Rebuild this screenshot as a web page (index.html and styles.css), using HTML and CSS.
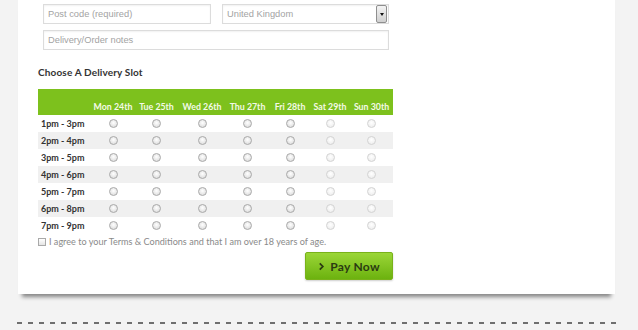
FILE: index.html
```html
<!DOCTYPE html>
<html>
<head>
  <title>Checkout - Delivery Slot</title>
  <link rel="stylesheet" href="styles.css">
</head>
<body>
  <div class="page">
    <div class="card">
      <div class="fields">
        <div class="field-row">
          <input class="text-input postcode" type="text" placeholder="Post code (required)">
          <div class="select-box">
            <span class="select-value">United Kingdom</span>
            <span class="select-btn"><span class="arrow"></span></span>
          </div>
        </div>
        <input class="text-input notes" type="text" placeholder="Delivery/Order notes">
      </div>

      <h3 class="slot-title">Choose A Delivery Slot</h3>

      <!-- Delivery slot grid -->
      <div class="slots">
        <div class="slot-row slot-head">
          <span></span>
          <span>Mon 24th</span>
          <span>Tue 25th</span>
          <span>Wed 26th</span>
          <span>Thu 27th</span>
          <span>Fri 28th</span>
          <span>Sat 29th</span>
          <span>Sun 30th</span>
        </div>
        <div class="slot-row">
          <span class="time">1pm - 3pm</span>
          <i class="radio"></i><i class="radio"></i><i class="radio"></i><i class="radio"></i><i class="radio"></i><i class="radio off"></i><i class="radio off"></i>
        </div>
        <div class="slot-row alt">
          <span class="time">2pm - 4pm</span>
          <i class="radio"></i><i class="radio"></i><i class="radio"></i><i class="radio"></i><i class="radio"></i><i class="radio off"></i><i class="radio off"></i>
        </div>
        <div class="slot-row">
          <span class="time">3pm - 5pm</span>
          <i class="radio"></i><i class="radio"></i><i class="radio"></i><i class="radio"></i><i class="radio"></i><i class="radio off"></i><i class="radio off"></i>
        </div>
        <div class="slot-row alt">
          <span class="time">4pm - 6pm</span>
          <i class="radio"></i><i class="radio"></i><i class="radio"></i><i class="radio"></i><i class="radio"></i><i class="radio off"></i><i class="radio off"></i>
        </div>
        <div class="slot-row">
          <span class="time">5pm - 7pm</span>
          <i class="radio"></i><i class="radio"></i><i class="radio"></i><i class="radio"></i><i class="radio"></i><i class="radio off"></i><i class="radio off"></i>
        </div>
        <div class="slot-row alt">
          <span class="time">6pm - 8pm</span>
          <i class="radio"></i><i class="radio"></i><i class="radio"></i><i class="radio"></i><i class="radio"></i><i class="radio off"></i><i class="radio off"></i>
        </div>
        <div class="slot-row">
          <span class="time">7pm - 9pm</span>
          <i class="radio"></i><i class="radio"></i><i class="radio"></i><i class="radio"></i><i class="radio"></i><i class="radio off"></i><i class="radio off"></i>
        </div>
      </div>

      <label class="agree">
        <span class="checkbox"></span>
        I agree to your Terms &amp; Conditions and that I am over 18 years of age.
      </label>

      <div class="pay-action">
        <button class="pay-btn">
          <svg class="chevron" viewBox="0 0 8 10"><polyline points="2,1.5 5.5,5 2,8.5" fill="none" stroke="#2b3a12" stroke-width="2"/></svg>
          Pay Now
        </button>
      </div>
    </div>

    <div class="dashes"></div>
  </div>
</body>
</html>
```

FILE: styles.css
```css
body {
  margin: 0;
  background: #f3f3f3;
  font-family: Lato, 'Open Sans', sans-serif;
}
.page {
  padding-left: 18px;
  padding-top: 0;
}
.card {
  width: 557px;
  background: #fff;
  padding: 4px 20px 14px;
  box-shadow: 0 7px 4px -4px rgba(0,0,0,0.45);
}

/* Address fields */
.fields {
  display: flex;
  flex-direction: column;
  gap: 6px;
  margin-left: 5px;
  width: 346px;
}
.field-row {
  display: flex;
  gap: 11px;
}
.text-input, .select-box {
  box-sizing: border-box;
  height: 20px;
  border: 1px solid #dcdcdc;
  box-shadow: inset 0 1px 2px rgba(0,0,0,0.06);
  font-family: 'Liberation Sans', Arial, sans-serif;
  font-size: 9.3px;
  color: #a3a3a3;
  padding: 0 4px;
  outline: none;
}
.text-input::placeholder {
  color: #a3a3a3;
}
.postcode {
  width: 168px;
}
.notes {
  width: 346px;
}
.select-box {
  width: 167px;
  display: flex;
  align-items: center;
  justify-content: space-between;
  padding-right: 0;
}
.select-btn {
  width: 11px;
  height: 18px;
  box-sizing: border-box;
  border: 1px solid #8f8f8f;
  border-radius: 2px;
  background: linear-gradient(#f4f4f4, #cfcfcf);
  display: flex;
  align-items: center;
  justify-content: center;
  margin-right: 1px;
}
.select-btn .arrow {
  width: 0;
  height: 0;
  border-left: 2px solid transparent;
  border-right: 2px solid transparent;
  border-top: 3px solid #111;
}

/* Slot grid */
.slot-title {
  margin: 16px 0 11px;
  font-size: 10px;
  font-weight: 700;
  color: #333;
  letter-spacing: 0.15px;
}
.slots {
  width: 355px;
}
.slot-row {
  display: grid;
  grid-template-columns: 54px 42px 45px 46px 45px 40px 40px 43px;
  align-items: center;
  justify-items: center;
  height: 17px;
}
.slot-row.alt {
  background: #f0f0f0;
}
.slot-head {
  height: 26px;
  background: #7dc11d;
  align-items: end;
  color: #f4fae8;
  font-size: 8.8px;
  font-weight: 700;
}
.slot-head span {
  padding-bottom: 3px;
  white-space: nowrap;
}
.time {
  justify-self: start;
  padding-left: 3px;
  font-size: 9px;
  font-weight: 700;
  color: #333;
  white-space: nowrap;
}
.radio {
  display: block;
  width: 7px;
  height: 7px;
  border-radius: 50%;
  border: 1px solid #a9a9a9;
  background: radial-gradient(circle at 50% 40%, #fff 0, #e2e2e2 70%);
}
.radio.off {
  border-color: #d3d3d3;
  background: radial-gradient(circle at 50% 40%, #fff 0, #f0f0f0 70%);
}

/* Terms and button */
.agree {
  display: flex;
  align-items: center;
  gap: 3px;
  margin-top: 2px;
  font-size: 9.1px;
  color: #8a8a8a;
  white-space: nowrap;
}
.checkbox {
  width: 6px;
  height: 6px;
  border: 1px solid #a9a9a9;
  background: linear-gradient(#fff, #e4e4e4);
}
.pay-action {
  display: flex;
  justify-content: flex-end;
  width: 355px;
  margin-top: 5px;
}
.pay-btn {
  width: 88px;
  height: 28px;
  border: 1px solid #79b21a;
  border-radius: 2px;
  background: linear-gradient(#9bd637, #6cb20f);
  box-shadow: 0 1px 2px rgba(0,0,0,0.2);
  display: flex;
  align-items: center;
  justify-content: center;
  gap: 5px;
  font-family: Lato, sans-serif;
  font-size: 12px;
  font-weight: 700;
  color: #2b3a12;
  letter-spacing: 0.3px;
  padding: 0;
}
.chevron {
  width: 7px;
  height: 9px;
}

.dashes {
  width: 603px;
  height: 2px;
  margin: 28px 0 0 -1px;
  background: linear-gradient(to right, #6f6f6f 0 5px, transparent 5px 11px);
  background-size: 11px 2px;
}
```
